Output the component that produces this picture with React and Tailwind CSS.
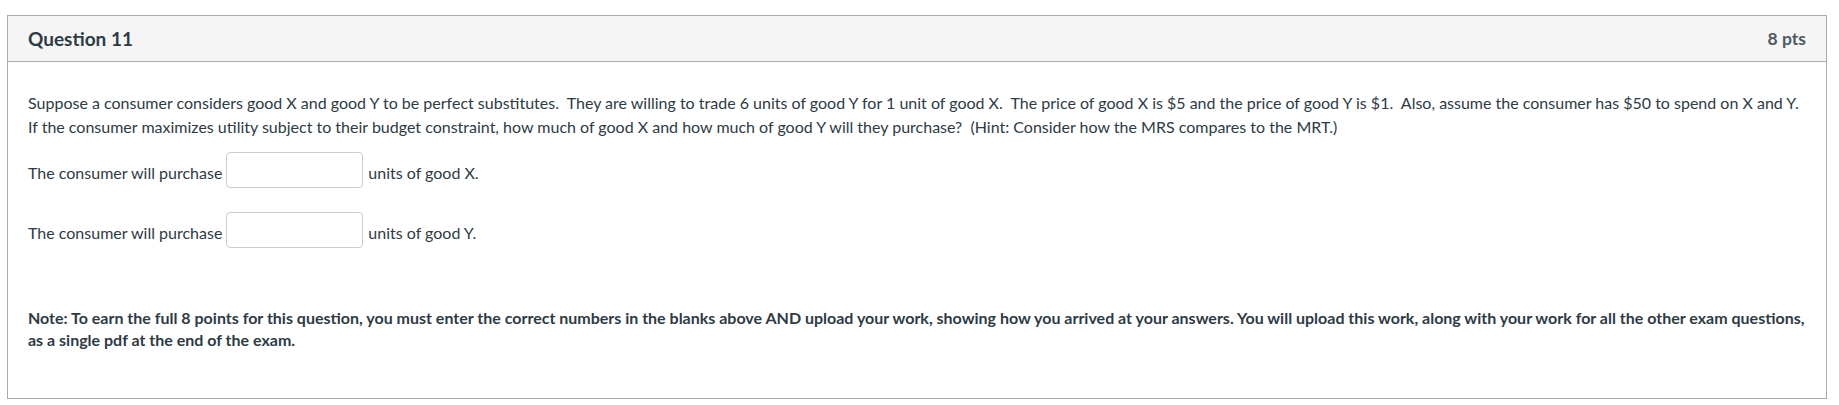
import React from "react";

export default function App() {
  return (
    <div className="w-[1839px] h-[405px] bg-white pt-[15px] px-[7px] text-[#2d3b45]" style={{ fontFamily: "Lato, 'Noto Sans', sans-serif" }}>
      <div className="w-[1820px] h-[384px] border border-[#aaaaaa] flex flex-col">
        <div className="h-[46px] bg-[#f5f5f5] border-b border-[#aaaaaa] flex items-center justify-between pl-[20px] pr-[20px]">
          <h2 className="text-[19px] font-bold leading-[24px]">Question 11</h2>
          <div className="text-[17.5px] font-bold leading-[24px] text-[#4e5a63]">8 pts</div>
        </div>
        <div className="px-[20px] pt-[29px] text-[16px] leading-[24px]">
          <p className="whitespace-nowrap">
            Suppose a consumer considers good X and good Y to be perfect substitutes.{"\u00a0 "}They are willing to trade 6 units of good Y for 1 unit of good X.{"\u00a0 "}The price of good X is $5 and the price of good Y is $1.{"\u00a0 "}Also, assume the consumer has $50 to spend on X and Y.
            <br />
            If the consumer maximizes utility subject to their budget constraint, how much of good X and how much of good Y will they purchase?{"\u00a0 "}(Hint: Consider how the MRS compares to the MRT.)
          </p>
          <div className="mt-[13px] flex items-start h-[36px]">
            <span className="mt-[9px] whitespace-nowrap">The consumer will purchase</span>
            <div className="ml-[4px] w-[137px] h-[36px] border border-[#c7cdd1] rounded-[4px] bg-white" />
            <span className="mt-[9px] ml-[5px] whitespace-nowrap">units of good X.</span>
          </div>
          <div className="mt-[24px] flex items-start h-[36px]">
            <span className="mt-[9px] whitespace-nowrap">The consumer will purchase</span>
            <div className="ml-[4px] w-[137px] h-[36px] border border-[#c7cdd1] rounded-[4px] bg-white" />
            <span className="mt-[9px] ml-[5px] whitespace-nowrap">units of good Y.</span>
          </div>
          <p className="mt-[59px] font-bold leading-[22px] whitespace-nowrap">
            Note: To earn the full 8 points for this question, you must enter the correct numbers in the blanks above AND upload your work, showing how you arrived at your answers. You will upload this work, along with your work for all the other exam questions,
            <br />
            as a single pdf at the end of the exam.
          </p>
        </div>
      </div>
    </div>
  );
}
